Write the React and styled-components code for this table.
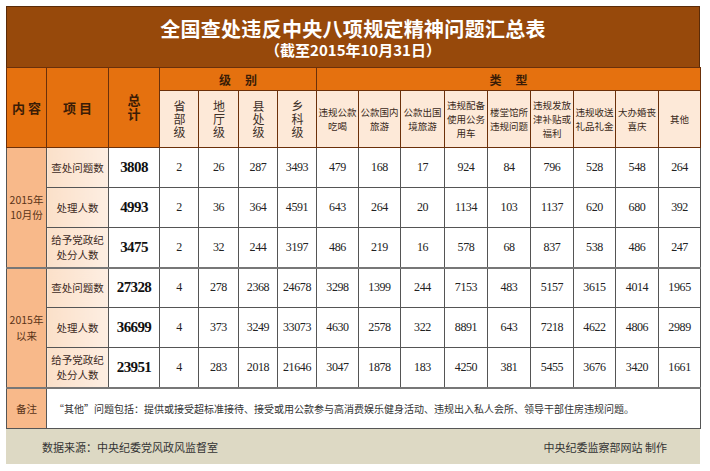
import React from "react"
import styled, { createGlobalStyle } from "styled-components"

const GlobalStyle = createGlobalStyle`
  body {
    margin: 0;
    background: #fff;
    font-family: "Noto Sans CJK SC", "Noto Sans", sans-serif;
  }
`

const levels = ["省部级", "地厅级", "县处级", "乡科级"]
const types = [
  ["违规公款", "吃喝"],
  ["公款国内", "旅游"],
  ["公款出国", "境旅游"],
  ["违规配备", "使用公务", "用车"],
  ["楼堂馆所", "违规问题"],
  ["违规发放", "津补贴或", "福利"],
  ["违规收送", "礼品礼金"],
  ["大办婚丧", "喜庆"],
  ["其他"],
]
const widths = [40, 62, 51, 39, 40, 39, 39, 42, 42, 44, 43, 43, 43, 42, 43, 42]

const groups = [
  {
    label: ["2015年", "10月份"],
    rows: [
      { name: ["查处问题数"], total: 3808, vals: [2, 26, 287, 3493, 479, 168, 17, 924, 84, 796, 528, 548, 264] },
      { name: ["处理人数"], total: 4993, vals: [2, 36, 364, 4591, 643, 264, 20, 1134, 103, 1137, 620, 680, 392] },
      { name: ["给予党政纪", "处分人数"], total: 3475, vals: [2, 32, 244, 3197, 486, 219, 16, 578, 68, 837, 538, 486, 247] },
    ],
  },
  {
    label: ["2015年", "以来"],
    rows: [
      { name: ["查处问题数"], total: 27328, vals: [4, 278, 2368, 24678, 3298, 1399, 244, 7153, 483, 5157, 3615, 4014, 1965] },
      { name: ["处理人数"], total: 36699, vals: [4, 373, 3249, 33073, 4630, 2578, 322, 8891, 643, 7218, 4622, 4806, 2989] },
      { name: ["给予党政纪", "处分人数"], total: 23951, vals: [4, 283, 2018, 21646, 3047, 1878, 183, 4250, 381, 5455, 3676, 3420, 1661] },
    ],
  },
]

export default function App() {
  return (
    <>
      <GlobalStyle />
      <Page>
        <TitleBand>
          <Title>全国查处违反中央八项规定精神问题汇总表</Title>
          <Subtitle>（截至2015年10月31日）</Subtitle>
        </TitleBand>
        <Table>
          <colgroup>
            {widths.map((w, i) => (
              <col key={i} style={{ width: w }} />
            ))}
          </colgroup>
          <thead>
            <HeadRow $h={23}>
              <Th rowSpan={2} $spaced>内容</Th>
              <Th rowSpan={2} $spaced>项目</Th>
              <Th rowSpan={2}>
                <Vertical $size={13} $gap={1}>总计</Vertical>
              </Th>
              <Th colSpan={4} $wide>级别</Th>
              <Th colSpan={9} $wide>类型</Th>
            </HeadRow>
            <HeadRow $h={57}>
              {levels.map((l) => (
                <SubTh key={l}>
                  <Vertical $size={12} $gap={1}>{l}</Vertical>
                </SubTh>
              ))}
              {types.map((t, i) => (
                <TypeTh key={i}>
                  {t.map((line) => (
                    <div key={line}>{line}</div>
                  ))}
                </TypeTh>
              ))}
            </HeadRow>
          </thead>
          <tbody>
            {groups.map((g, gi) =>
              g.rows.map((r, ri) => (
                <Row key={`${gi}-${ri}`}>
                  {ri === 0 && (
                    <GroupCell rowSpan={3} $top={gi > 0}>
                      {g.label.map((l) => (
                        <div key={l}>{l}</div>
                      ))}
                    </GroupCell>
                  )}
                  <NameCell $top={gi > 0 && ri === 0}>
                    {r.name.map((n) => (
                      <div key={n}>{n}</div>
                    ))}
                  </NameCell>
                  <TotalCell $top={gi > 0 && ri === 0}>{r.total}</TotalCell>
                  {r.vals.map((v, vi) => (
                    <Num key={vi} $top={gi > 0 && ri === 0}>
                      {v}
                    </Num>
                  ))}
                </Row>
              ))
            )}
            <NoteRow>
              <NoteLabel>备注</NoteLabel>
              <NoteText colSpan={15}>
                “其他”问题包括：提供或接受超标准接待、接受或用公款参与高消费娱乐健身活动、违规出入私人会所、领导干部住房违规问题。
              </NoteText>
            </NoteRow>
          </tbody>
        </Table>
        <Footer>
          <span>数据来源：中央纪委党风政风监督室</span>
          <span>中央纪委监察部网站 制作</span>
        </Footer>
      </Page>
    </>
  )
}

const Page = styled.div`
  width: 694px;
  padding: 6px 0 0 6px;
`

const TitleBand = styled.div`
  box-sizing: border-box;
  height: 61px;
  background: #97490b;
  border: 1px solid #5a2b08;
  border-bottom: none;
  display: flex;
  flex-direction: column;
  align-items: center;
  justify-content: center;
  color: #fff;
  padding-top: 1px;
`

const Title = styled.h1`
  margin: 0;
  font-size: 20px;
  line-height: 23px;
  font-weight: 700;
  letter-spacing: 0.3px;
`

const Subtitle = styled.div`
  font-size: 15px;
  line-height: 19px;
  font-weight: 700;
`

const Table = styled.table`
  width: 694px;
  table-layout: fixed;
  border-collapse: collapse;
  border: 1px solid #555;
`

const HeadRow = styled.tr`
  height: ${(p) => p.$h}px;
`

const Th = styled.th`
  background: #e5710f;
  border: 1px solid #6b300a;
  color: #3a1c06;
  font-size: ${(p) => (p.$wide ? 12 : 13)}px;
  font-weight: 700;
  padding: 0;
  letter-spacing: ${(p) => (p.$wide ? "14px" : p.$spaced ? "3px" : "0")};
  text-indent: ${(p) => (p.$wide ? "14px" : p.$spaced ? "3px" : "0")};
  line-height: 13px;
`

const Vertical = styled.div`
  writing-mode: vertical-rl;
  text-orientation: upright;
  margin: 0 auto;
  font-size: ${(p) => p.$size}px;
  letter-spacing: ${(p) => p.$gap}px;
  line-height: 1;
  text-indent: 0;
`

const SubTh = styled.th`
  background: #fde9d8;
  border: 1px solid #6b300a;
  color: #3d3028;
  font-weight: 400;
  padding: 0;
`

const TypeTh = styled.th`
  background: #fde9d8;
  border: 1px solid #6b300a;
  color: #3a2a20;
  font-size: 9.5px;
  line-height: 14px;
  font-weight: 400;
  padding: 0;
  white-space: nowrap;
`

const Row = styled.tr`
  height: 40px;
`

const cellBorder = (p) => (p.$top ? "border-top: 2px solid #777;" : "")

const GroupCell = styled.td`
  background: #f8b98a;
  border: 1px solid #555;
  ${cellBorder}
  color: #5a3418;
  font-size: 10.5px;
  line-height: 15.5px;
  text-align: center;
  padding: 0;
`

const NameCell = styled.td`
  background: linear-gradient(90deg, #fbe0c9, #fdeee2);
  border: 1px solid #555;
  ${cellBorder}
  color: #3c2a1e;
  font-size: 10.5px;
  line-height: 15px;
  text-align: center;
  padding: 0;
`

const Num = styled.td`
  background: #fff;
  border: 1px solid #555;
  ${cellBorder}
  color: #222;
  font-family: "Liberation Serif", "Times New Roman", serif;
  font-size: 12px;
  letter-spacing: -0.4px;
  text-align: center;
  padding: 0;
`

const TotalCell = styled(Num)`
  font-size: 15px;
  font-weight: 700;
  color: #111;
  letter-spacing: -0.6px;
`

const NoteRow = styled.tr`
  height: 41px;
`

const NoteLabel = styled.td`
  background: #f8b98a;
  border: 1px solid #555;
  border-top: 2px solid #777;
  color: #5a3418;
  font-size: 10.5px;
  text-align: center;
  padding: 0;
`

const NoteText = styled.td`
  background: #fff;
  border: 1px solid #555;
  border-top: 2px solid #777;
  color: #333;
  font-size: 10px;
  padding: 0 0 0 7px;
  white-space: nowrap;
`

const Footer = styled.div`
  height: 35px;
  background: #ddd9c4;
  display: flex;
  align-items: center;
  justify-content: space-between;
  padding: 0 33px 0 36px;
  color: #333;
  font-size: 11px;
`
